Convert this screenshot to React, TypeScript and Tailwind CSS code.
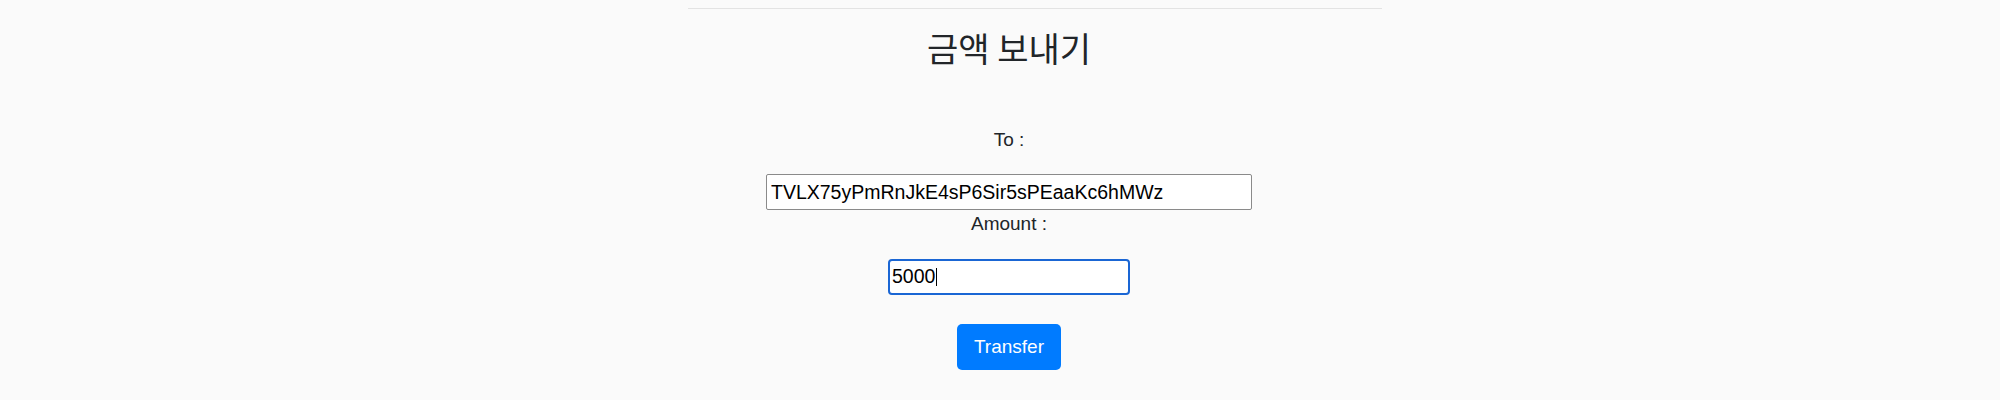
const SendForm = () => {
  return (
    <div className="flex flex-col items-center pl-[18px]">
      <h2 className="mt-[19px] text-[34px] leading-[40px] font-normal text-[#212529] font-['Noto_Sans_CJK_KR',sans-serif]">
        금액 보내기
      </h2>
      <label className="mt-[58px] mb-[20px] text-[19px] leading-[28px]">To :</label>
      <input
        readOnly
        value="TVLX75yPmRnJkE4sP6Sir5sPEaaKc6hMWz"
        className="w-[486px] h-[36px] px-[4px] text-[19.5px] text-black bg-white border border-[#8a8a8a] rounded-[2px] outline-none"
      />
      <label className="mb-[21px] text-[19px] leading-[28px]">Amount :</label>
      <div className="flex items-center w-[242px] h-[36px] px-[2px] text-[19.5px] text-black bg-white border-2 border-[#1a66d4] rounded-[4px]">
        5000
        <span className="inline-block w-px h-[18px] ml-[1px] bg-black" />
      </div>
      <button className="mt-[29px] w-[104px] h-[46px] rounded-[5px] bg-[#007bff] text-white text-[19px] leading-[28px]">
        Transfer
      </button>
    </div>
  );
};

export default function App() {
  return (
    <div className="min-h-[400px] bg-[#fafafa] text-[#212529] font-['Liberation_Sans',sans-serif]">
      <div className="flex justify-center pt-[8px] pl-[70px]">
        <div className="w-[694px] h-[1px] bg-[#e3e3e3]" />
      </div>
      <SendForm />
    </div>
  );
}
